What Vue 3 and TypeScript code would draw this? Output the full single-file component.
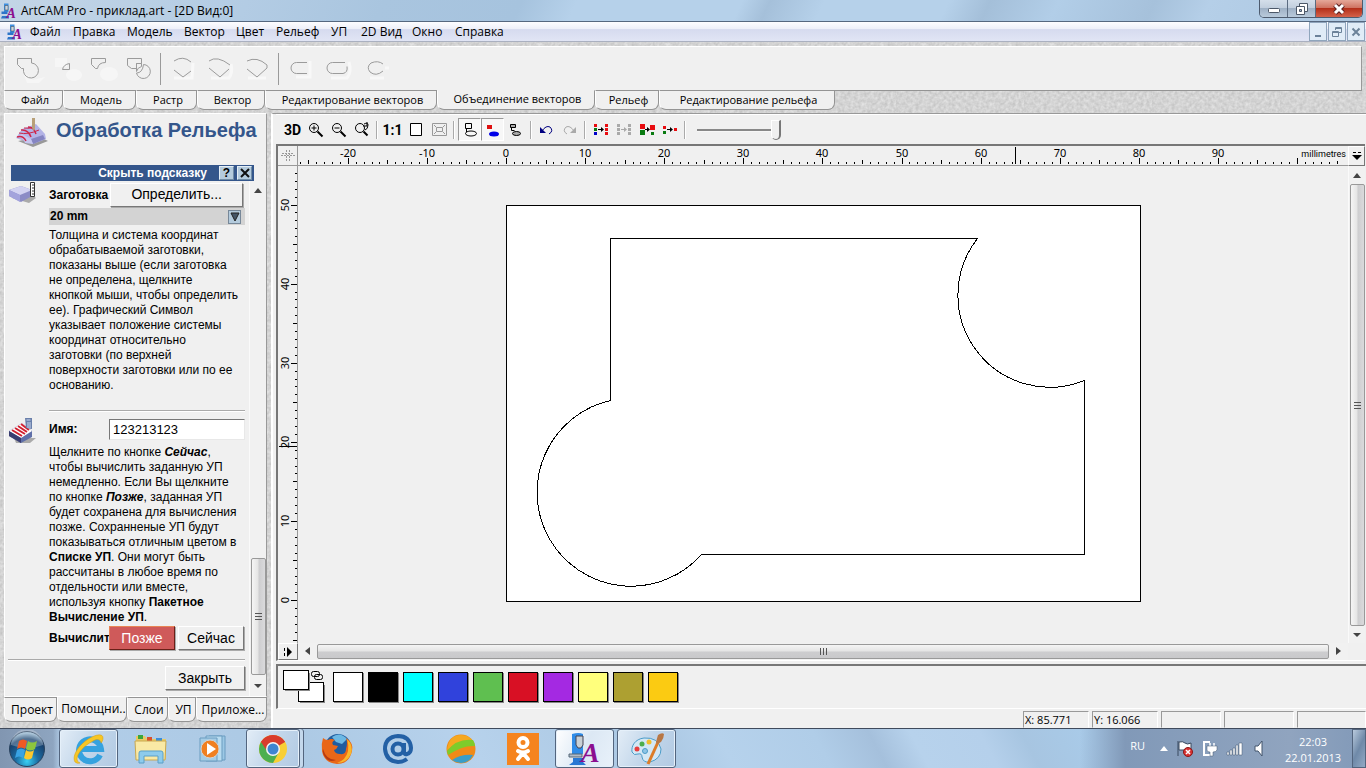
<script setup lang="ts">
import { ref } from 'vue'

interface Tick { pos: number; size: number; label: string }

const menu: string[] = ['Файл', 'Правка', 'Модель', 'Вектор', 'Цвет', 'Рельеф', 'УП', '2D Вид', 'Окно', 'Справка']
const toolTabs: string[] = ['Файл', 'Модель', 'Растр', 'Вектор', 'Редактирование векторов', 'Объединение векторов', 'Рельеф', 'Редактирование рельефа']
const activeToolTab = ref(5)
const sideTabs: string[] = ['Проект', 'Помощни..', 'Слои', 'УП', 'Приложе...']
const activeSideTab = ref(1)
const pathName = ref('123213123')
const contrast = ref(100)

const palette: string[] = ['#ffffff', '#000000', '#00ffff', '#3042dc', '#5fbf50', '#d81024', '#a429e2', '#ffff7c', '#ada031', '#fbcb12']

const scale = 7.91

function ticks(from: number, to: number, origin: number, dir: number, lastLabel: number): Tick[] {
  const out: Tick[] = []
  for (let mm = from; mm <= to; mm++) {
    const size = mm % 10 === 0 ? 6 : mm % 5 === 0 ? 4 : 2
    out.push({
      pos: Math.round(origin + dir * mm * scale),
      size,
      label: mm % 10 === 0 && mm <= lastLabel ? String(mm) : '',
    })
  }
  return out
}

const hTicks = ticks(-26, 105, 208, 1, 90)
const vTicks = ticks(-5, 54, 434, -1, 50)
</script>

<template>
  <div class="app">
    <header class="titlebar">
      <svg class="logo" viewBox="0 0 32 32" aria-hidden="true">
        <path d="M6 1h9v17H6z" fill="#3c8fe0" /><path d="M8 5h6v9H8z" fill="#c9d6e2" stroke="#444" />
        <path d="M1 17h12v5H1zM2 26h14v5H0z" fill="#2d74c8" />
        <text x="11" y="30" class="logo-a">A</text>
      </svg>
      <span class="title">ArtCAM Pro - приклад.art - [2D Вид:0]</span>
      <div class="win-buttons">
        <button type="button" aria-label="Свернуть" class="wb">
          <svg width="14" height="14"><rect x="1.500" y="6.500" width="11" height="4" rx="1" fill="#fff" stroke="#4c5868" /></svg>
        </button>
        <button type="button" aria-label="Развернуть" class="wb">
          <svg width="14" height="14"><path d="M4.500 1.500h8v8h-8z" fill="#fff" stroke="#4c5868" /><path d="M1.500 4.500h8v8h-8z" fill="#fff" stroke="#4c5868" /><path d="M4.500 7.500h2v2h-2z" fill="#9fb4cc" stroke="#4c5868" /></svg>
        </button>
        <button type="button" aria-label="Закрыть окно" class="wb close">
          <svg width="14" height="12"><path d="M3 2l8 8M11 2l-8 8" stroke="#5a2020" stroke-width="5" /><path d="M3 2l8 8M11 2l-8 8" stroke="#fff" stroke-width="3" /></svg>
        </button>
      </div>
    </header>

    <nav class="menubar">
      <svg class="logo" viewBox="0 0 32 32" aria-hidden="true">
        <path d="M6 1h9v17H6z" fill="#3c8fe0" /><path d="M8 5h6v9H8z" fill="#c9d6e2" stroke="#444" />
        <path d="M1 17h12v5H1zM2 26h14v5H0z" fill="#2d74c8" />
        <text x="11" y="30" class="logo-a">A</text>
      </svg>
      <div class="menu">
        <button v-for="m in menu" :key="m" type="button">{{ m }}</button>
      </div>
      <div class="mdi">
        <button type="button" aria-label="Свернуть документ"><svg width="12" height="12"><path d="M3 9h6v2H3z" fill="#6b8299" /></svg></button>
        <button type="button" aria-label="Восстановить документ"><svg width="12" height="12" fill="none" stroke="#6b8299"><path d="M4.500 4V1.500h6v5H8M4 2.500h7" /><path d="M1.500 5.500h6v5h-6zM1 6.500h7" /></svg></button>
        <button type="button" aria-label="Закрыть документ"><svg width="12" height="12"><path d="M2.500 2.500l7 7M9.500 2.500l-7 7" stroke="#6b8299" stroke-width="2" /></svg></button>
      </div>
    </nav>

    <section class="toolstrip">
      <div class="toolpanel">
        <button type="button" aria-label="Объединить"><svg width="38" height="30" class="dim"><path d="M14 18l10 8 12-3-6 6H18z" class="glow" /><path d="M8.500 4.500h14v4.500a7.500 7.500 0 1 1-8 8.500v-3h-2l-4-4z" /></svg></button>
        <button type="button" aria-label="Пересечь"><svg width="38" height="30" class="dim"><path d="M9 4h12v9H9z" class="glow" /><ellipse cx="28" cy="21" rx="8" ry="6" class="glow" /><path d="M16.500 15.500q1-5 7-6v6z" /></svg></button>
        <button type="button" aria-label="Вычесть"><svg width="38" height="30" class="dim"><ellipse cx="26" cy="20" rx="9" ry="7" class="glow" /><path d="M8.500 4.500h14v4q-7 0-8 6h-2l-4-4z" /></svg></button>
        <button type="button" aria-label="Разделить"><svg width="38" height="30" class="dim"><path d="M7.500 4.500h14v5h-5v5h-5l-4-3z" /><path d="M16.500 9.500h5v3q-4 1-5 5z" /><path d="M23.500 10.500a7 7 0 1 1-7 8.500q6 0 7-8.500z" /></svg></button>
        <i class="rule"></i>
        <button type="button" aria-label="Соединить линией"><svg width="38" height="30" class="dim"><path d="M10 24h18l1-15" class="glowline" /><path d="M10 7q9-6 17 1M10 16l9 7 8-6" /></svg></button>
        <button type="button" aria-label="Соединить кривой"><svg width="38" height="30" class="dim"><path d="M10 24h18q4-6 2-14" class="glowline" /><path d="M8 7q8-6 21 4M8 14l11 9 9-8" /></svg></button>
        <button type="button" aria-label="Переместить концы"><svg width="38" height="30" class="dim"><path d="M10 24h18" class="glowline" /><path d="M9 7q10-5 20 4v3l-10 9-10-8" /></svg></button>
        <i class="rule"></i>
        <button type="button" aria-label="Замкнуть прямой"><svg width="38" height="30" class="dim"><path d="M28 7v16H14" class="glowline" /><path d="M25 8.500H14.500a5 5 0 0 0 0 11H25" /></svg></button>
        <button type="button" aria-label="Замкнуть дугой"><svg width="38" height="30" class="dim"><path d="M12 24h16q5-6 2-16" class="glowline" /><path d="M26 8.500H13.500a5 5 0 0 0 0 11H24q5-1 4-7" /></svg></button>
        <button type="button" aria-label="Замкнуть"><svg width="38" height="30" class="dim"><path d="M14 24h14M29 14h4" class="glowline" /><path d="M27 10q-5-4-12-1-5 4-1 9 6 5 13-1" /></svg></button>
      </div>
      <div class="tool-tabs" role="tablist">
        <button v-for="(t, i) in toolTabs" :key="t" type="button" role="tab" class="tab" :class="{ on: i === activeToolTab }" @click="activeToolTab = i">{{ t }}</button>
        <span class="tab-rest"></span>
      </div>
    </section>

    <div class="work">
      <aside class="side">
        <div class="assistant">
          <div class="head">
            <svg width="34" height="30" aria-hidden="true">
              <path d="M3 23l22-4 8 4-15 6z" fill="#999" /><path d="M1 20l6-9 14-5 9 10 1 5-13 5z" fill="#b3b3e6" /><path d="M18 26l12-5-2-4-12 4z" fill="#8585c2" /><path d="M1 20q7-2 9 5l8 1-2-5-9-5z" fill="#c6c6ef" />
              <path d="M2 19q6-2 9 4M6 12q7-1 10 7M13 9q6 0 8 7" fill="none" stroke="#cf2549" stroke-width="1.500" /><path d="M4 15q9 2 20-3M9 10q6 1 10-1" fill="none" stroke="#cf2549" /><path d="M17 0h3v10l-1 3-2-3z" fill="#b8a078" />
            </svg>
            <h1>Обработка Рельефа</h1>
          </div>
          <div class="hintbar">
            <span>Скрыть подсказку</span>
            <button type="button">?</button>
            <button type="button" aria-label="Закрыть подсказку"><svg width="12" height="12"><path d="M2 2l8 8M10 2l-8 8" stroke="#111" stroke-width="2" /></svg></button>
          </div>
          <div class="scrollarea">
            <div class="body">
              <div class="row stock">
                <svg width="30" height="24" class="ricon" aria-hidden="true"><path d="M4 16l17 5 7-5-6-5z" fill="#aaa" /><path d="M1 8l12-4 11 4v6l-11 6L1 14z" fill="#8c8cc6" /><path d="M1 8l12-4 11 4-12 5z" fill="#d3d3f2" /><path d="M1 8l11 5v7L1 14z" fill="#a3a3dc" /><path d="M22.500 0.500h4v14h-4z" fill="#fff" stroke="#333" /><path d="M24 3h3M24 6h3M24 9h3M24 12h3" stroke="#333" /></svg>
                <b class="lab">Заготовка</b>
                <button type="button" class="btn define">Определить...</button>
              </div>
              <div class="thick"><b>20 mm</b><button type="button" aria-label="Развернуть заготовку"><svg width="12" height="12"><path d="M2 2h8L6 10z" fill="#456" stroke="#222" /></svg></button></div>
              <p>Толщина и система координат<br>обрабатываемой заготовки,<br>показаны выше (если заготовка<br>не определена, щелкните<br>кнопкой мыши, чтобы определить<br>ее). Графический Символ<br>указывает положение системы<br>координат относительно<br>заготовки (по верхней<br>поверхности заготовки или по ее<br>основанию.</p>
              <hr class="inner">
              <div class="row name">
                <svg width="30" height="28" class="ricon" aria-hidden="true"><path d="M6 21h22l-6 5H8z" fill="#aaa" /><path d="M1 14l13-8 10 8v6l-11 6L1 19z" fill="#5f6fa8" /><path d="M1 14l13-8 10 8-11 7z" fill="#fff" /><path d="M1 14l12 7v5L1 19z" fill="#3a3d70" /><path d="M4 13l10 6M7 11l10 6M10 9l9 6M13 7l8 6" stroke="#d12030" stroke-width="2" /><path d="M17 1h7v11l-6-1z" fill="#697faa" /><path d="M18.500 3h4M19 6h4M19 8h4M19 10h4" stroke="#ccd8ef" /></svg>
                <label for="path-name" class="lab">Имя:</label>
                <input id="path-name" v-model="pathName" type="text">
              </div>
              <p>Щелкните по кнопке <b><i>Сейчас</i></b>,<br>чтобы вычислить заданную УП<br>немедленно. Если Вы щелкните<br>по кнопке <b><i>Позже</i></b>, заданная УП<br>будет сохранена для вычисления<br>позже. Сохранненые УП будут<br>показываться отличным цветом в<br><b>Списке УП</b>. Они могут быть<br>рассчитаны в любое время по<br>отдельности или вместе,<br>используя кнопку <b>Пакетное</b><br><b>Вычисление УП</b>.</p>
              <div class="row calc">
                <b class="lab">Вычислит</b>
                <button type="button" class="btn later">Позже</button>
                <button type="button" class="btn now">Сейчас</button>
              </div>
              <hr>
              <div class="row end"><button type="button" class="btn shut">Закрыть</button></div>
            </div>
            <div class="vbar side-bar">
              <svg width="9" height="5" class="arr"><path d="M0 5l4-5 4 5z" fill="#444" /></svg>
              <div class="thumb side-thumb"><i></i><i></i><i></i></div>
              <svg width="9" height="5" class="arr"><path d="M0 0h8L4 4z" fill="#444" /></svg>
            </div>
          </div>
        </div>
        <div class="side-tabs" role="tablist">
          <button v-for="(t, i) in sideTabs" :key="t" type="button" role="tab" class="tab" :class="{ on: i === activeSideTab }" @click="activeSideTab = i">{{ t }}</button>
        </div>
      </aside>

      <main class="main">
        <div class="viewbar">
          <button type="button" class="txt">3D</button>
          <button type="button" aria-label="Увеличить"><svg width="18" height="18" class="ink"><circle cx="7" cy="7" r="4.500" /><path d="M4.500 7h5M7 4.500v5" /><path d="M10.500 10.500l5 5" stroke-width="2" /></svg></button>
          <button type="button" aria-label="Уменьшить"><svg width="18" height="18" class="ink"><circle cx="7" cy="7" r="4.500" /><path d="M4.500 7h5" /><path d="M10.500 10.500l5 5" stroke-width="2" /></svg></button>
          <button type="button" aria-label="Предыдущий масштаб"><svg width="18" height="18" class="ink"><circle cx="7" cy="7" r="4.500" /><path d="M10.500 10.500l4 4" stroke-width="2" /><path d="M11 3q4-2 4 1 0 4-3 5M14 1v4h-4" /></svg></button>
          <i class="sep"></i>
          <button type="button" class="txt">1:1</button>
          <button type="button" aria-label="Окно"><svg width="18" height="18"><path d="M3.500 2.500h11v12h-11z" fill="#fff" stroke="#000" /></svg></button>
          <button type="button" aria-label="По объекту"><svg width="18" height="18" fill="none" stroke="#999"><path d="M2.500 2.500h14v12h-14zM6.500 6.500h6v4h-6zM4 4l2 2M15 4l-2 2M4 13l2-2M15 13l-2-2" /></svg></button>
          <i class="sep"></i>
          <button type="button" aria-label="Показать векторы" class="down"><svg width="18" height="18" class="ink"><path d="M4.500 2.500h6v5h-6zM5.500 8v3" /><ellipse cx="10" cy="12.500" rx="5.500" ry="2.500" /></svg></button>
          <button type="button" aria-label="Показать растр" class="down"><svg width="18" height="18"><path d="M3 4h5v4H3z" fill="#df1010" /><ellipse cx="10" cy="13" rx="5" ry="2.500" fill="#0000e8" /></svg></button>
          <button type="button" aria-label="Показать оттенки"><svg width="18" height="18" class="ink"><path d="M3.500 3.500h5v3h-5z" fill="#aaa" /><ellipse cx="9.500" cy="12.500" rx="4" ry="2" fill="#aaa" /><path d="M4.500 7v2.500h3" /></svg></button>
          <i class="sep"></i>
          <button type="button" aria-label="Отменить"><svg width="18" height="18" fill="none" stroke="#000080"><path d="M4 10q4-6 8-4 4 4-1 7" /><path d="M2 6v6h6z" fill="#000080" stroke="none" /></svg></button>
          <button type="button" aria-label="Повторить"><svg width="18" height="18" fill="none" stroke="#aaa"><path d="M13 10Q9 4 5 6q-4 4 1 7" /><path d="M15 6v6H9z" fill="#aaa" stroke="none" /></svg></button>
          <i class="sep"></i>
          <button type="button" aria-label="Связать цвета"><svg width="18" height="18"><path d="M2 3h3v3H2zM13 3h3v3h-3zM13 7h3v3h-3zM13 11h3v3h-3z" fill="#e80c10" /><path d="M2 7h3v3H2z" fill="#087a10" /><path d="M2 11h3v3H2z" fill="#0000c8" /><path d="M6 8.500h4" stroke="#000" /><path d="M9 6l3 2.500L9 11z" /></svg></button>
          <button type="button" aria-label="Разъединить цвета"><svg width="18" height="18"><path d="M2 3h3v3H2zM13 3h3v3h-3zM13 7h3v3h-3zM13 11h3v3h-3zM2 7h3v3H2zM2 11h3v3H2zM9 6l3 2.500L9 11z" fill="#aaa" /><path d="M6 8.500h4" stroke="#aaa" /></svg></button>
          <button type="button" aria-label="Заменить цвет"><svg width="18" height="18"><path d="M2 3h5v5H2zM12 4h5v5h-5z" fill="#e80c10" /><path d="M2 9h5v5H2zM13 11h3v3h-3z" fill="#087a10" /><path d="M7 8.500h3" stroke="#000" /><path d="M9 6l3 2.500L9 11z" /></svg></button>
          <button type="button" aria-label="Уменьшить цвета"><svg width="18" height="18"><path d="M2 5h3v3H2zM13 7h3v3h-3z" fill="#e80c10" /><path d="M2 10h3v3H2z" fill="#087a10" /><path d="M6 8.500h4" stroke="#000" /><path d="M9 6l3 2.500L9 11z" /></svg></button>
          <i class="sep"></i>
          <input v-model="contrast" type="range" min="0" max="100" aria-label="Контраст">
        </div>

        <div class="canvasframe">
          <div class="corner"><svg width="18" height="18" fill="none" stroke="#999" stroke-dasharray="2 1"><path d="M3 9.500h14M8.500 4v12M11.500 4v12M4 7.500h12" /></svg></div>
          <div class="hruler">
            <svg class="fill" shape-rendering="crispEdges">
              <g v-for="t in hTicks" :key="t.pos">
                <rect :x="t.pos" :y="18 - t.size" width="1" :height="t.size" />
                <text v-if="t.label" :x="t.pos" y="11" text-anchor="middle">{{ t.label }}</text>
              </g>
              <rect x="717" y="1" width="1" height="17" />
            </svg>
            <span class="unit">millimetres</span>
          </div>
          <button type="button" class="corner-btn" aria-label="Единицы"><svg width="12" height="12"><path d="M2 2.500h3M7 2.500h3" stroke="#000" /><path d="M1 5h10L6 10z" /></svg></button>
          <div class="vruler">
            <svg class="fill" shape-rendering="crispEdges">
              <g v-for="t in vTicks" :key="t.pos">
                <rect :x="19 - t.size" :y="t.pos" :width="t.size" height="1" />
                <text v-if="t.label" :transform="`translate(11 ${t.pos}) rotate(-90)`" text-anchor="middle">{{ t.label }}</text>
              </g>
              <rect x="1" y="280" width="18" height="1" />
            </svg>
          </div>
          <div class="canvas">
            <svg class="fill" shape-rendering="crispEdges">
              <rect x="208.500" y="39.500" width="634" height="396" fill="#fff" stroke="#000" />
              <path d="M312.500 72.500H679.500A92 92 0 0 0 786.500 214.500V388.500H403.500A94 94 0 1 1 312.500 234.500Z" fill="none" stroke="#000" />
            </svg>
          </div>
          <div class="vbar">
            <svg width="9" height="5" class="arr"><path d="M0 5l4-5 4 5z" fill="#444" /></svg>
            <div class="thumb grow"><i></i><i></i><i></i></div>
            <svg width="9" height="5" class="arr"><path d="M0 0h8L4 4z" fill="#444" /></svg>
          </div>
          <button type="button" class="corner-btn" aria-label="Виды"><svg width="12" height="12"><path d="M2.500 2v3M2.500 7v3" stroke="#000" /><path d="M5 1v10l5-5z" /></svg></button>
          <div class="hbar">
            <svg width="5" height="9" class="arr"><path d="M5 0v8L0 4z" fill="#444" /></svg>
            <div class="thumb hthumb"><i></i><i></i><i></i></div>
            <svg width="5" height="9" class="arr"><path d="M0 0v8l5-4z" fill="#444" /></svg>
          </div>
          <div></div>
        </div>

        <div class="palette">
          <svg class="pair" width="44" height="36" aria-label="Основной и дополнительный цвета">
            <path d="M17 16h25v18H17z" fill="#888" /><rect x="15.500" y="13.500" width="25" height="19" fill="#fff" stroke="#000" />
            <path d="M2 4h25v18H2z" fill="#888" /><rect x="0.500" y="1.500" width="25" height="19" fill="#fff" stroke="#000" />
            <rect x="28.500" y="2.500" width="8" height="5" rx="2" fill="none" stroke="#000" /><rect x="31.500" y="5.500" width="8" height="5" rx="2" fill="none" stroke="#000" />
          </svg>
          <button v-for="(c, i) in palette" :key="c" type="button" class="swatch" :aria-label="`Цвет ${i + 1}`" :style="{ background: c }"></button>
        </div>

        <footer class="status">
          <span>X: 85.771</span><span>Y: 16.066</span><span></span><span></span><span></span>
        </footer>
      </main>
    </div>

    <div class="taskbar">
      <button type="button" class="start" aria-label="Пуск">
        <svg width="38" height="38" viewBox="0 0 38 38">
          <defs><radialGradient id="orb" cx="50%" cy="85%" r="80%"><stop offset="0" stop-color="#39d0f4" /><stop offset=".4" stop-color="#1c6ca2" /><stop offset=".8" stop-color="#17406c" /><stop offset="1" stop-color="#8fb2cc" /></radialGradient></defs>
          <circle cx="19" cy="19" r="17.500" fill="url(#orb)" stroke="#29425e" />
          <path d="M3 15a16 16 0 0 1 32 0q-16 6-32 0z" fill="#fff" opacity=".25" />
          <path d="M11 11q4-3 8 0l-2 8q-4-3-8 0z" fill="#ee5a24" /><path d="M20 11q4 3 9 0l-2 8q-5 3-9 0z" fill="#8cc63e" /><path d="M9 20q4-3 8 0l-2 8q-4-3-8 0z" fill="#39a3e4" /><path d="M18 20q4 3 8 0l-2 8q-4 3-8 0z" fill="#fcc82c" />
        </svg>
      </button>
      <button type="button" class="task open" aria-label="Internet Explorer">
        <svg width="34" height="34"><g fill="none" stroke="#35a2df" stroke-width="6"><path d="M28 23a11 11 0 1 1 1-6H9" /></g><path d="M3 30c-4-7 6-20 17-25 6-3 11-3 11 1 0 2-1 4-2 5 0-3-3-5-8-2C13 13 5 21 5 27q0 3 3 4-3 1-5-1z" fill="#f7c624" stroke="#d39a10" stroke-width=".5" /></svg>
      </button>
      <button type="button" class="task" aria-label="Проводник">
        <svg width="34" height="32"><path d="M2 3h9l2 3h19v20H2z" fill="#e9c964" /><path d="M4 2h5v4H4z" fill="#3ba53c" /><path d="M13 4h5v4h-5z" fill="#d9502c" /><path d="M22 5h6v4h-6z" fill="#3d8ed6" /><path d="M1 8h31l-1 19H2z" fill="#f9e9a5" stroke="#c9a850" /><path d="M5 30V20q0-2 2-2h20q2 0 2 2v10h-5v-7H10v7z" fill="#8dcbec" stroke="#5a9fc8" /></svg>
      </button>
      <button type="button" class="task" aria-label="Проигрыватель">
        <svg width="32" height="32"><path d="M12 3h16v24H12z" fill="#9cc8e5" stroke="#6b9cc0" /><path d="M9 3h16v25H9z" fill="#b9dcf0" stroke="#6b9cc0" /><path d="M3 5h17v23H3z" fill="#a5cde6" stroke="#6b9cc0" /><circle cx="13" cy="16" r="9" fill="#f08021" stroke="#d4d4d4" /><path d="M10 10v12l9-6z" fill="#fff" /></svg>
      </button>
      <button type="button" class="task open stacked" aria-label="Google Chrome">
        <svg width="32" height="32" viewBox="0 0 32 32"><circle cx="16" cy="16" r="14" fill="#f8cf35" /><path d="M16 16L3.900 9A14 14 0 0 1 28.100 9z" fill="#d93c2c" /><path d="M16 16L3.900 9A14 14 0 0 0 16 30l6-11z" fill="#4caf50" /><path d="M16 9h12.100A14 14 0 0 0 4 9l6 9z" fill="#d93c2c" /><circle cx="16" cy="16" r="7" fill="#f4f4f4" /><circle cx="16" cy="16" r="5.500" fill="#3f85d0" /></svg>
      </button>
      <button type="button" class="task" aria-label="Firefox">
        <svg width="34" height="34"><circle cx="18" cy="15" r="13" fill="#1f5c9f" /><path d="M12 5q8-6 15 2l-5 5-6-2z" fill="#6cb8e4" /><path d="M3 6q2 2 5 2Q11 6 15 8q-4 2-2 5l5 1q-1 3-4 4 1 4 6 4 6 1 6-5 2-6 0-11 8 5 6 13-3 13-15 13Q4 31 2 19q-1-7 1-13z" fill="#e96718" /><path d="M27 7q7 7 4 15-4 9-14 9 9-3 11-12 1-6-1-12z" fill="#f9b72b" /><path d="M3 17q3 11 13 11-7 3-11-3-3-4-2-8z" fill="#b63a12" /></svg>
      </button>
      <button type="button" class="task mail" aria-label="Почта">
        <svg width="34" height="34" fill="none" stroke="#2360a5" stroke-width="4"><circle cx="16" cy="17" r="5.500" /><path d="M22 11v8q0 4 3 3 4-1 4-6Q28 4 16 4 3 5 3 17q1 12 13 13 5 0 9-3" /></svg>
      </button>
      <button type="button" class="task" aria-label="Браузер">
        <svg width="32" height="32"><circle cx="16" cy="16" r="14.500" fill="#f08a18" /><path d="M2 17Q4 2 16 2q8 0 12 6-12-3-26 9z" fill="#f5a820" /><path d="M2 18Q12 5 28 7q2 3 2 6Q18 12 3 22z" fill="#7dcc2b" /><path d="M5 25q12-9 25-9 0 4-2 6-12-1-21 5z" fill="#f08a18" /><path d="M7 27q9-6 21-5-4 8-12 8-5 0-9-3z" fill="#3a9dc8" /></svg>
      </button>
      <button type="button" class="task" aria-label="Одноклассники">
        <svg width="32" height="32"><path d="M0 0h32v32H0z" fill="#f5841f" /><g fill="none" stroke="#fff" stroke-width="4" stroke-linecap="round"><circle cx="16" cy="9.500" r="4.500" /><path d="M11 18q5 3 10 0M16 20l-5 6M16 20l5 6" /></g></svg>
      </button>
      <button type="button" class="task open active" aria-label="ArtCAM Pro">
        <svg width="34" height="34" viewBox="0 0 34 34"><path d="M4 2q7-2 11 0v20H4z" fill="#2f8ce8" /><path d="M1 22h13v3H1z" fill="#b0bcc8" stroke="#567" /><path d="M5 26h10v4l3 3H1l4-3z" fill="#2878d4" /><path d="M8 4h7v9l-2 3h-3l-2-3z" fill="#c8d0d6" stroke="#445" /><text x="13" y="30" class="logo-a">A</text></svg>
      </button>
      <button type="button" class="task open paint" aria-label="Paint">
        <svg width="34" height="34"><path d="M14 6C5 7 1 14 2 20q2 4 6 2 4-1 4 3 1 6 8 5 11-3 11-13Q28 5 14 6z" fill="#d3e8f5" stroke="#4b9cc8" /><circle cx="7" cy="17" r="2.500" fill="#e63e3e" /><circle cx="12" cy="12" r="2.500" fill="#4cae4b" /><circle cx="19" cy="10" r="2.500" fill="#f3bd2b" /><circle cx="15" cy="19" r="2.500" fill="#8ec5e6" stroke="#4b9cc8" /><path d="M29 8L18 32" stroke="#dc7c28" stroke-width="3" /><path d="M26 10l2-7q4-3 6-1 0 4-3 8l-4 2z" fill="#b87745" /></svg>
      </button>
      <div class="tray">
        <span class="lang">RU</span>
        <svg width="9" height="5"><path d="M0 5l4-5 4 5z" fill="#fff" /></svg>
        <svg width="18" height="18"><path d="M2 1v15M3 2q4-1 6 1t6 0v7H3z" fill="#fff" stroke="#38485e" /><circle cx="12" cy="12" r="4.500" fill="#d93333" stroke="#8b1515" /><path d="M10 10l4 4M14 10l-4 4" stroke="#fff" stroke-width="1.500" /></svg>
        <svg width="18" height="18"><path d="M9 2H3v13h7" fill="none" stroke="#fff" stroke-width="2" /><path d="M9 3v3M13 3v3" stroke="#fff" stroke-width="1.500" /><path d="M6 6h10v4q-1 2-4 2v4H9v-4q-3 0-3-2z" fill="#fff" stroke="#43556c" stroke-width=".5" /></svg>
        <svg width="18" height="16"><path d="M1 11h2v3H1zM4 9h2v5H4zM7 7h2v7H7zM10 4h2v10h-2zM13 2h3v12h-3z" fill="#fff" stroke="#43556c" stroke-width=".5" /></svg>
        <svg width="18" height="18"><path d="M4 6h3l4-5v15l-4-5H4z" fill="#fff" stroke="#43556c" /></svg>
        <div class="clock"><span>22:03</span><span>22.01.2013</span></div>
        <button type="button" class="desk" aria-label="Показать рабочий стол"></button>
      </div>
    </div>
  </div>
</template>

<style>
body { margin: 0; background: #f0f0f0; }
</style>

<style scoped>
.app, .app * { box-sizing: border-box; }
.app {
  height: 100vh; display: flex; flex-direction: column; overflow: hidden;
  font: 12px/16px "Open Sans", "Noto Sans", sans-serif; color: #000;
  background-color: #d2d2d2;
  background-image: url("data:image/svg+xml,%3Csvg xmlns='http://www.w3.org/2000/svg' width='128' height='128'%3E%3Cfilter id='n' color-interpolation-filters='sRGB'%3E%3CfeTurbulence type='fractalNoise' baseFrequency='.3' numOctaves='2' stitchTiles='stitch'/%3E%3CfeColorMatrix values='.18 0 0 0 .74 .18 0 0 0 .74 .18 0 0 0 .74 0 0 0 0 1'/%3E%3C/filter%3E%3Crect width='128' height='128' filter='url(%23n)'/%3E%3C/svg%3E");
}
button { font: inherit; color: inherit; padding: 0; margin: 0; border: 0; background: none; white-space: nowrap; }
svg { display: block; flex: none; }
.logo { width: 16px; height: 16px; }
.logo, .active svg { overflow: visible; }
.logo-a { font: italic bold 28px "Liberation Serif", serif; fill: #8b0f8f; }

.titlebar {
  height: 22px; flex: none; display: flex; align-items: center; padding-left: 1px;
  border-bottom: 1px solid #56687f;
  background: linear-gradient(115deg, #c3d5e6 0, #b3cce4 18%, #a9c5df 28%, #a6c3de 38%, #b6d1ea 42%, #b6d1ea 54%, #a5c0da 56%, #b6d1ea 60%, #b6d1ea 69%, #a4bfd9 72%, #b2cee8 77%, #a6c1db 84%, #b5cfe8 88%, #abc6df 100%);
}
.title { margin-left: 4px; flex: 1; }
.win-buttons { display: flex; align-self: flex-start; height: 18px; margin-right: 3px; border: 1px solid #4d5b6e; border-top: 0; border-radius: 0 0 5px 5px; overflow: hidden; }
.wb { width: 28px; display: grid; place-items: center; border-right: 1px solid #5b6b80; background: linear-gradient(#d5dfea, #c2cfde 45%, #9fb1c5 50%, #b9cadb); }
.wb.close { width: 46px; border: 0; background: linear-gradient(#e5a899, #cf7462 45%, #b4301a 50%, #d4614a); }

.menubar { height: 20px; flex: none; display: flex; align-items: center; padding-left: 7px; border-bottom: 1px solid #aab0c0; background: linear-gradient(#fdfdff, #eef0f9 35%, #d6dbef 40%, #e1e5f5); }
.menu { display: grid; grid-template-columns: 43px 54px 57px 52px 40px 55px 30px 51px 43px 60px; margin-left: 7px; flex: 1; }
.menu button { text-align: left; }
.mdi { display: flex; gap: 1px; height: 19px; padding-right: 1px; }
.mdi button { width: 18px; display: grid; place-items: center; border: 1px solid #8fa5bc; background: #e0ecf7; }

.toolstrip { flex: none; padding: 4px 4px 3px 4px; }
.toolpanel { height: 44px; display: flex; align-items: center; padding-left: 4px; background: #f0f0f0; border: solid #fff; border-width: 1px 0 0 1px; border-right: 1px solid #999; }
.toolpanel button { width: 37px; height: 30px; display: grid; place-items: center; }
.rule { width: 1px; height: 32px; background: #9a9a9a; margin: 0 3px; }
.dim { fill: none; stroke: #9b9b9b; }
.dim .glow { fill: #f6f6f6; stroke: none; }
.dim .glowline { stroke: #f8f8f8; stroke-width: 3; }
.tool-tabs { display: grid; grid-template-columns: 59px 73px 61px 68px 172px 158px 64px 176px 1fr; height: 20px; font-size: 11px; }
.tool-tabs .tab { padding-left: 3px; }
.tab { background: #f0f0f0; border: solid #949494; border-width: 1px 1px 1px 0; border-radius: 0 0 7px 7px; border-left: 1px solid #fff; }
.tab.on { border-top-color: #f0f0f0; padding-bottom: 2px; }
.tab-rest { border-top: 1px solid #949494; }

.work { flex: 1; min-height: 0; display: flex; }
.side { width: 271px; flex: none; display: flex; flex-direction: column; padding: 0 4px 6px 4px; }
.assistant { flex: 1; min-height: 0; display: flex; flex-direction: column; background: #f0f0f0; border: 1px solid #fff; border-right-color: #999; font-family: "Liberation Sans", Arial, sans-serif; line-height: 15px; }
.head { display: flex; height: 51px; padding: 4px 0 0 10px; }
.head h1 { margin: 0 0 0 7px; font-size: 20px; line-height: 24px; color: #34568b; white-space: nowrap; }
.hintbar { height: 16px; margin: 0 12px 0 6px; display: flex; align-items: center; justify-content: flex-end; gap: 3px; padding-right: 2px; background: #34568b; color: #fff; font-weight: bold; }
.hintbar span { margin-right: 9px; }
.hintbar button { width: 15px; height: 14px; display: grid; place-items: center; background: #b4cbdd; border: 1px solid; border-color: #e4eef6 #6f8ba5 #6f8ba5 #e4eef6; color: #000; line-height: 12px; }
.scrollarea { flex: 1; min-height: 0; display: flex; }
.body { flex: 1; min-width: 0; padding: 1px 4px 0 3px; }
.row { display: flex; align-items: center; }
.ricon { margin-right: 11px; align-self: flex-start; }
.lab { font-weight: bold; white-space: nowrap; }
.btn { height: 24px; font-size: 14px; background: #f0f0f0; border: 1px solid; border-color: #fff #777 #777 #fff; box-shadow: 1px 1px 0 #aaa; }
.define { width: 133px; margin-left: 2px; }
.stock { height: 25px; }
.stock .lab { padding-top: 2px; }
.thick { height: 17px; margin: 1px 0 3px 41px; padding: 0 4px 0 1px; display: flex; align-items: center; justify-content: space-between; background: #d3d3d3; }
.thick button { width: 13px; height: 14px; display: grid; place-items: center; background: #b4cbdd; border: 1px solid #789; }
p { margin: 0 0 0 41px; white-space: nowrap; }
hr { border: 0; border-top: 1px solid #aaa; border-bottom: 1px solid #fff; margin: 0; }
.inner { margin: 17px 0 5px 41px; }
.name { height: 28px; }
.name .lab { width: 60px; padding-bottom: 4px; }
.name input { flex: 1; min-width: 0; height: 21px; margin-bottom: 4px; padding: 0 3px; font: 13px/18px "Liberation Sans", Arial, sans-serif; background: #fff; border: 1px solid; border-color: #777 #e8e8e8 #e8e8e8 #777; border-radius: 0; }
.calc { padding-left: 41px; height: 26px; }
.calc .lab { width: 60px; }
.later { width: 66px; background: #cf5a5a; color: #fff; border-color: #e88454 #6a2018 #6a2018 #e88454; }
.now { width: 66px; margin-left: 3px; }
.calc + hr { margin-top: 8px; }
.end { justify-content: flex-end; padding-top: 5px; }
.shut { width: 80px; }

.vbar { width: 17px; flex: none; display: flex; flex-direction: column; align-items: center; justify-content: space-between; padding: 7px 1px 5px; background: #f1f1f1; border-left: 1px solid #fafafa; }
.side-bar { padding-bottom: 7px; }
.thumb { border: 1px solid #999; border-radius: 2px; background: linear-gradient(90deg, #f5f5f5, #e4e4e4 48%, #cdcdcf 52%, #dadadc); display: flex; flex-direction: column; align-items: center; justify-content: center; gap: 2px; width: 15px; }
.thumb i { width: 7px; height: 1px; background: #555; }
.side-thumb { height: 117px; margin-top: auto; margin-bottom: 9px; }
.grow { flex: 1; margin: 6px 0 7px; }
.hbar { display: flex; align-items: center; padding: 0 7px; gap: 7px; background: #f1f1f1; }
.hthumb { flex: 1; width: auto; height: 15px; flex-direction: row; background: linear-gradient(#f5f5f5, #e4e4e4 48%, #cdcdcf 52%, #c9c9cb); }
.hthumb i { width: 1px; height: 7px; }
.side-tabs { height: 25px; flex: none; display: grid; grid-template-columns: 53px 70px 41px 28px 71px; }
.side-tabs .tab { overflow: hidden; padding-left: 3px; }

.main { flex: 1; min-width: 0; display: flex; flex-direction: column; background: #f0f0f0; border-left: 2px solid #fff; border-top: 1px solid #999; padding-left: 3px; }
.viewbar { height: 30px; flex: none; display: flex; align-items: center; padding-left: 5px; border-top: 1px solid #fff; }
.viewbar button { width: 23px; height: 23px; flex: none; display: grid; place-items: center; }
.viewbar .txt { font: bold 14px/16px "Roboto", "Liberation Sans", sans-serif; }
.viewbar .down { border: 1px solid; border-color: #999 #fff #fff #999; background: #f7f7f7; }
.ink { fill: none; stroke: #000; }
.sep { width: 8px; height: 18px; flex: none; background: linear-gradient(90deg, transparent 3px, #aaa 3px, #aaa 4px, #fff 4px, #fff 5px, transparent 5px); }
.viewbar input { appearance: none; width: 84px; height: 22px; margin: 0 0 0 8px; background: linear-gradient(transparent 10px, #888 10px, #888 12px, #fff 12px, transparent 13px); }
.viewbar input::-webkit-slider-thumb { appearance: none; width: 10px; height: 20px; background: #f0f0f0; border: 1px solid; border-color: #fff #777 #777 #fff; border-right-width: 2px; border-radius: 0 0 5px 5px; }

.canvasframe { flex: 1; min-height: 0; display: grid; grid-template-columns: 20px 1fr 17px; grid-template-rows: 20px 1fr 17px; border: solid #777; border-width: 2px 0 0 2px; border-bottom: 1px solid #fff; margin-right: 1px; }
.corner, .hruler, .vruler, .canvas { position: relative; overflow: hidden; }
.corner, .hruler { border-bottom: 1px solid #999; }
.corner, .vruler { border-right: 1px solid #999; }
.fill { width: 100%; height: 100%; }
.unit { position: absolute; right: 2px; top: 1px; font: 9px/14px "Roboto", sans-serif; background: #f0f0f0; }
.hruler text, .vruler text { font: 11px "Noto Sans", sans-serif; }
.corner-btn { display: grid; place-items: center; border: 1px solid; border-color: #fff #777 #777 #fff; background: #f0f0f0; }

.palette { height: 45px; flex: none; margin-top: 3px; display: flex; align-items: center; gap: 5px; padding-left: 5px; border: 2px solid #777; border-width: 2px 0 0 2px; border-bottom: 1px solid #fff; }
.pair { margin-right: 1px; }
.swatch { width: 30px; height: 30px; border: 1px solid #000; box-shadow: 1px 1px 0 #888; }
.status { height: 19px; flex: none; display: grid; grid-template-columns: 66px 66px 60px 70px 69px; gap: 3px; justify-content: end; padding-top: 2px; }
.status span { border: 1px solid; border-color: #999 #fff transparent #999; padding-left: 1px; line-height: 15px; font-size: 11px; }

.taskbar {
  height: 40px; flex: none; display: flex; align-items: stretch; border-top: 1px solid #3f4a5c;
  background: linear-gradient(90deg, #8196b1 0, #8ea5c0 53px, transparent 61px), linear-gradient(90deg, transparent 1080px, #8199b8 1125px, #90a4bf 1290px, #8199b8), linear-gradient(62deg, #b3cfea 0, #acc9e4 22%, #b7d2ec 35%, #aac7e2 48%, #b6d2ec 53%, #b0cde8 60%, #a5c0dc 64%, #b7d2ec 67%, #b5d0eb 72%, #a7c5e1 75%, #a9cbe9 80%, #a7c4e0 100%);
}
.start { width: 54px; display: grid; place-items: center; }
.task { width: 62px; display: grid; place-items: center; }
.task.open { width: 59px; border: 1px solid #53657e; border-radius: 3px; background: linear-gradient(115deg, #e3edf7, #c2d6ea 50%, #b2cae3); box-shadow: inset 0 0 0 1px #e5f0fa; }
.start + .task { margin-left: 5px; margin-right: 2px; }
.task.stacked { width: 54px; margin: 0 6px 0 2px; box-shadow: inset 0 0 0 1px #e5f0fa, 3px 0 0 #c4d8ec, 4px 0 0 #53657e; }
.task.active { margin: 0 3px 0 1px; background: linear-gradient(115deg, #fff, #dce8f4 50%, #e8f1fa); }
.tray { margin-left: auto; display: flex; align-items: center; gap: 6px; color: #fff; font-size: 11px; }
.lang { margin-right: 9px; margin-bottom: 6px; }
.tray svg + svg { margin-left: 1px; }
.clock { display: flex; flex-direction: column; align-items: center; width: 66px; margin-left: 5px; padding-top: 2px; }
.desk { width: 14px; align-self: stretch; border: 1px solid #53657e; background: linear-gradient(115deg, #b9cadd, #6f89a8 50%, #93aac5); }
</style>
